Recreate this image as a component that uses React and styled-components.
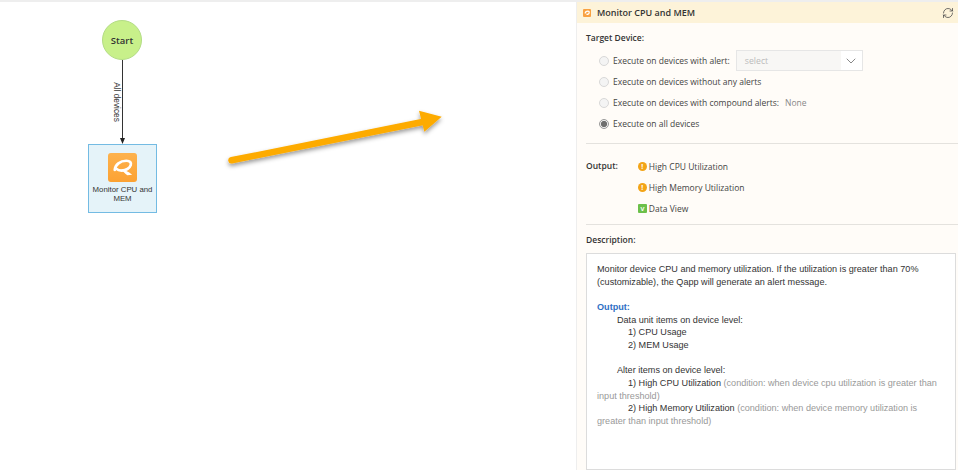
import React from "react";
import styled, { createGlobalStyle } from "styled-components";
import { LuRefreshCw } from "react-icons/lu";
import { FiChevronDown } from "react-icons/fi";

const Global = createGlobalStyle`
  html, body {
    margin: 0;
    padding: 0;
    background: #fff;
    overflow: hidden;
  }
  * { box-sizing: border-box; }
`;

const alerts = [
  { id: "alert", label: "Execute on devices with alert:", select: true },
  { id: "none", label: "Execute on devices without any alerts" },
  { id: "compound", label: "Execute on devices with compound alerts:", note: "None" },
  { id: "all", label: "Execute on all devices", checked: true },
];

function QLogo({ size }) {
  return (
    <svg width={size} height={size} viewBox="0 0 30 30">
      <defs>
        <linearGradient id="logoFill" x1="0" y1="0" x2="0" y2="1">
          <stop offset="0" stopColor="#fdb24e" />
          <stop offset="1" stopColor="#fca233" />
        </linearGradient>
      </defs>
      <rect width="30" height="30" rx="3" fill="url(#logoFill)" />
      <path
        d="M7 17.500C7.500 12 12.500 8 19 8c3.800 0 5.300 1.900 4.500 4.500-1 3.200-5 5.700-9.300 5.700-2.200 0-4.200-.4-5.400-1.700"
        fill="none"
        stroke="#fff"
        strokeWidth="2.800"
        strokeLinecap="round"
      />
      <path d="M13.500 16.500c3.500.8 7.500 2.500 11.500 6l-5 .6c-2.200-2-4.500-4-6.500-6.600z" fill="#fff" />
    </svg>
  );
}

function Flow() {
  return (
    <Canvas>
      <StartNode>Start</StartNode>
      <Edge>
        <line x1="2.500" y1="0" x2="2.500" y2="81" stroke="#333" strokeWidth="1" />
        <path d="M0 78h5l-2.500 6z" fill="#222" />
      </Edge>
      <EdgeLabel>All devices</EdgeLabel>
      <TaskNode>
        <QLogo size={29} />
        <TaskName>Monitor CPU and MEM</TaskName>
      </TaskNode>
      <BigArrow viewBox="0 0 240 75" width="240" height="75">
        <defs>
          <filter id="soft" x="-10%" y="-40%" width="120%" height="190%">
            <feDropShadow dx="0" dy="2.500" stdDeviation="2" floodColor="#000" floodOpacity="0.4" />
          </filter>
        </defs>
        <g filter="url(#soft)">
          <path d="M16.500 60.300 L210 21.500" stroke="#fdab03" strokeWidth="6.500" strokeLinecap="round" />
          <path d="M204 10.700 L226.700 16.700 L209.300 31.700z" fill="#fdab03" />
        </g>
      </BigArrow>
    </Canvas>
  );
}

export default function App() {
  return (
    <>
      <Global />
      <Page>
        <Flow />
        <Panel>
          <Header>
            <HeaderIcon>
              <svg width="6" height="6" viewBox="0 0 10 10">
                <path d="M2 6c0-3 2-4 4.500-4C8.500 2 9 3 8.500 5 8 7 6 7.500 4 7" fill="none" stroke="#fff" strokeWidth="2" />
              </svg>
            </HeaderIcon>
            <Title>Monitor CPU and MEM</Title>
            <Refresh>
              <LuRefreshCw size={12} strokeWidth={1.500} />
            </Refresh>
          </Header>
          <TargetSection>
            <Label>Target Device:</Label>
            <Options>
              {alerts.map((a) => (
                <Option key={a.id}>
                  <Radio $checked={a.checked} />
                  <span>{a.label}</span>
                  {a.select && (
                    <Select>
                      <SelectValue>select</SelectValue>
                      <SelectArrow>
                        <FiChevronDown size={16} strokeWidth={1.500} />
                      </SelectArrow>
                    </Select>
                  )}
                  {a.note && <Note>{a.note}</Note>}
                </Option>
              ))}
            </Options>
          </TargetSection>
          <OutputRow>
            <Label>Output:</Label>
            <OutputList>
              <OutputItem>
                <Warn>!</Warn>High CPU Utilization
              </OutputItem>
              <OutputItem>
                <Warn>!</Warn>High Memory Utilization
              </OutputItem>
              <OutputItem>
                <DataBadge>V</DataBadge>Data View
              </OutputItem>
            </OutputList>
          </OutputRow>
          <DescSection>
            <Label>Description:</Label>
            <DescBox>
              <Line>Monitor device CPU and memory utilization. If the utilization is greater than 70% (customizable), the Qapp will generate an alert message.</Line>
              <Line>&nbsp;</Line>
              <Line><Blue>Output:</Blue></Line>
              <Line $indent={20}>Data unit items on device level:</Line>
              <Line $indent={31}>1) CPU Usage</Line>
              <Line $indent={31}>2) MEM Usage</Line>
              <Line>&nbsp;</Line>
              <Line $indent={20}>Alter items on device level:</Line>
              <Line $indent={31}>
                1) High CPU Utilization <Muted>(condition: when device cpu utilization is greater than input threshold)</Muted>
              </Line>
              <Line $indent={31}>
                2) High Memory Utilization <Muted>(condition: when device memory utilization is greater than input threshold)</Muted>
              </Line>
            </DescBox>
          </DescSection>
        </Panel>
      </Page>
    </>
  );
}

const Page = styled.div`
  display: flex;
  width: 958px;
  height: 470px;
  border-top: 2px solid #eeeeee;
  overflow: hidden;
`;

const Canvas = styled.div`
  position: relative;
  width: 576px;
  flex: none;
  background: #fff;
`;

const StartNode = styled.div`
  position: absolute;
  left: 102px;
  top: 18px;
  width: 40px;
  height: 40px;
  border-radius: 50%;
  background: #c8f08a;
  border: 1px solid #b3dc85;
  display: flex;
  align-items: center;
  justify-content: center;
  font: 600 9.500px "Open Sans", sans-serif;
  color: #333;
`;

const Edge = styled.svg`
  position: absolute;
  left: 120px;
  top: 58px;
  width: 5px;
  height: 85px;
`;

const EdgeLabel = styled.div`
  position: absolute;
  left: 87px;
  top: 95px;
  width: 60px;
  text-align: center;
  transform: rotate(90deg);
  font: 8.300px "Liberation Sans", sans-serif;
  line-height: 10px;
  color: #333;
`;

const TaskNode = styled.div`
  position: absolute;
  left: 88px;
  top: 142px;
  width: 69px;
  height: 69px;
  background: #e5f3f9;
  border: 1px solid #73bbe3;
  display: flex;
  flex-direction: column;
  align-items: center;
  padding: 8px 2px 0;
`;

const TaskName = styled.div`
  margin-top: 4px;
  font: 7.800px/8.700px "Liberation Sans", sans-serif;
  color: #333;
  text-align: center;
`;

const BigArrow = styled.svg`
  position: absolute;
  left: 215px;
  top: 98px;
`;

const Panel = styled.div`
  flex: 1;
  min-width: 0;
  display: flex;
  flex-direction: column;
  background: #fffcf8;
  border-left: 1px solid #eeeeee;
  font: 8.500px "Open Sans", sans-serif;
  color: #444;
`;

const Header = styled.div`
  display: flex;
  align-items: center;
  height: 21px;
  flex: none;
  padding: 0 4px 0 6px;
  background: #fdf3d9;
`;

const HeaderIcon = styled.span`
  display: flex;
  align-items: center;
  justify-content: center;
  width: 8px;
  height: 8px;
  border-radius: 1px;
  background: #f9a141;
`;

const Title = styled.div`
  margin-left: 6px;
  font-size: 9px;
  font-weight: 600;
  color: #333;
`;

const Refresh = styled.span`
  margin-left: auto;
  display: flex;
  color: #444;
`;

const TargetSection = styled.div`
  flex: none;
  height: 120px;
  padding: 9px 9px 0;
`;

const Label = styled.div`
  font-weight: 600;
  color: #333;
  font-size: 8.500px;
  line-height: 12px;
`;

const Options = styled.div`
  display: flex;
  flex-direction: column;
  margin: 6px 0 0 13px;
`;

const Option = styled.div`
  display: flex;
  align-items: center;
  height: 21.100px;
`;

const Radio = styled.span`
  width: 10px;
  height: 10px;
  margin-right: 4px;
  border-radius: 50%;
  border: 1px solid ${(p) => (p.$checked ? "#999" : "#d8d8d8")};
  background: ${(p) => (p.$checked ? "radial-gradient(circle, #6e6e6e 0 2.800px, #eee 3.300px)" : "#f4f4f4")};
`;

const Select = styled.div`
  display: flex;
  width: 127px;
  height: 21px;
  margin-left: 6px;
  border: 1px solid #e6e6e6;
  background: #fff;
`;

const SelectValue = styled.div`
  flex: 1;
  display: flex;
  align-items: center;
  padding-left: 8px;
  background: #f8f7f5;
  color: #bbb;
  font-size: 8.700px;
`;

const SelectArrow = styled.div`
  width: 21px;
  display: flex;
  align-items: center;
  justify-content: center;
  color: #888;
`;

const Note = styled.span`
  margin-left: 6px;
  color: #888;
`;

const OutputRow = styled.div`
  flex: none;
  height: 81px;
  margin-left: 9px;
  display: flex;
  padding-top: 16px;
  border-top: 1px solid #e4e2de;
`;

const OutputList = styled.div`
  display: flex;
  flex-direction: column;
  margin-left: 20px;
`;

const OutputItem = styled.div`
  display: flex;
  align-items: center;
  height: 21px;
  margin-top: -4px;
  margin-bottom: 4px;
`;

const Warn = styled.span`
  display: flex;
  align-items: center;
  justify-content: center;
  flex: none;
  width: 9px;
  height: 9px;
  margin-right: 2px;
  border-radius: 50%;
  background: #f3a417;
  color: #fff;
  font-size: 7px;
  font-weight: 700;
`;

const DataBadge = styled(Warn)`
  border-radius: 1px;
  background: #6cc04a;
  font-size: 6px;
`;

const DescSection = styled.div`
  flex: 1;
  min-height: 0;
  margin-left: 9px;
  padding: 9px 2px 0 0;
  border-top: 1px solid #e4e2de;
  display: flex;
  flex-direction: column;
`;

const DescBox = styled.div`
  flex: 1;
  margin-top: 7px;
  padding: 9px 10px;
  background: #fff;
  border: 1px solid #dcdcdc;
  font: 9.100px/12.670px "Liberation Sans", sans-serif;
  color: #333;
`;

const Line = styled.div`
  text-indent: ${(p) => p.$indent || 0}px;
`;

const Blue = styled.span`
  color: #2f6fc4;
  font-weight: 700;
`;

const Muted = styled.span`
  color: #999;
`;
